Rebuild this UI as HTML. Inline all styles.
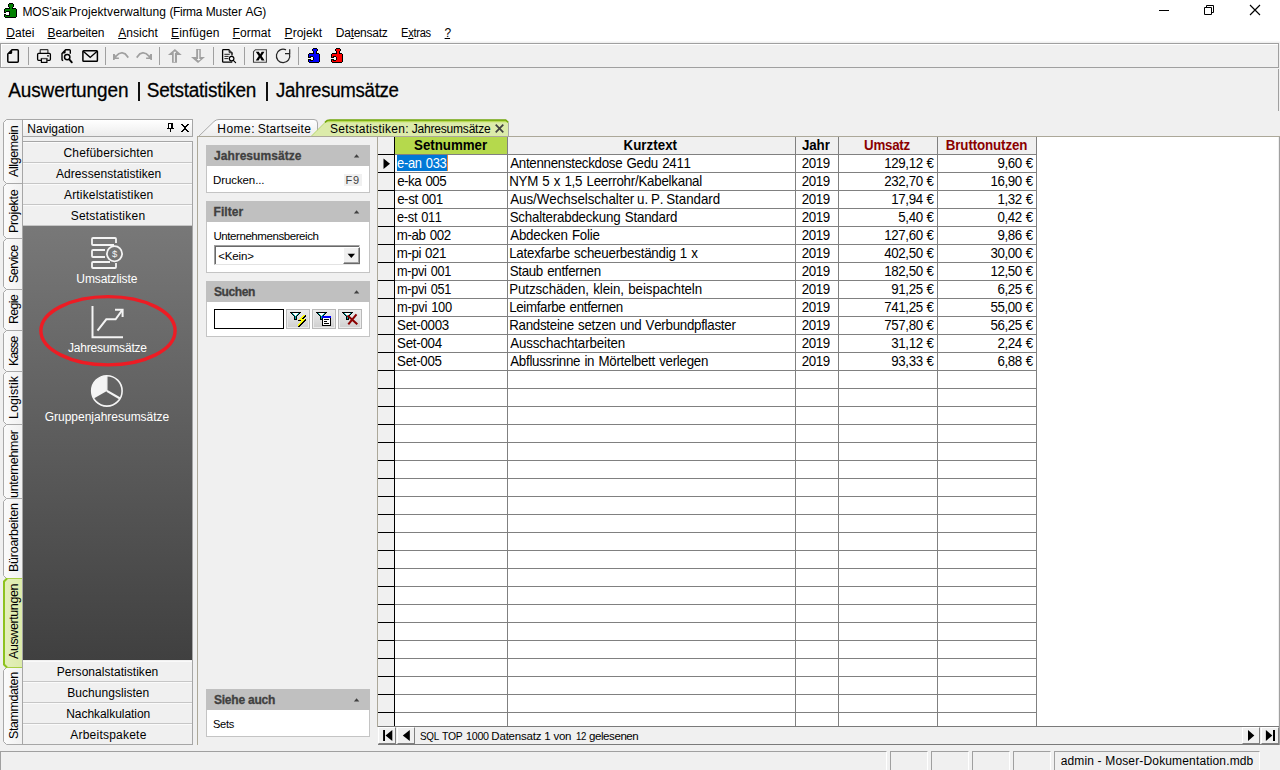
<!DOCTYPE html>
<html><head><meta charset="utf-8">
<style>
*{box-sizing:border-box;margin:0;padding:0}
html,body{width:1280px;height:770px;overflow:hidden;background:#f0f0f0;font-family:"Liberation Sans",sans-serif;color:#000}
.a{position:absolute}
.t{position:absolute;white-space:nowrap;font-kerning:none}
u{text-decoration:underline;text-underline-offset:0.5px;text-decoration-thickness:1px}
</style></head><body>
<div class="a" style="left:0px;top:0px;width:1280px;height:41px;background:#fff"></div>
<div class="a" style="left:0px;top:41px;width:1280px;height:1px;background:#f8f8f8"></div>
<svg class="a" style="left:0;top:0" width="22" height="22" viewBox="0 0 22 22" shape-rendering="crispEdges"><rect x="9" y="3" width="4" height="1" fill="#000"/><rect x="8" y="4" width="1" height="1" fill="#000"/><rect x="9" y="4" width="4" height="1" fill="#008000"/><rect x="13" y="4" width="1" height="1" fill="#000"/><rect x="8" y="5" width="1" height="1" fill="#000"/><rect x="9" y="5" width="4" height="1" fill="#008000"/><rect x="13" y="5" width="1" height="1" fill="#000"/><rect x="8" y="6" width="1" height="1" fill="#000"/><rect x="9" y="6" width="4" height="1" fill="#008000"/><rect x="13" y="6" width="1" height="1" fill="#000"/><rect x="9" y="7" width="1" height="1" fill="#000"/><rect x="10" y="7" width="2" height="1" fill="#008000"/><rect x="12" y="7" width="1" height="1" fill="#000"/><rect x="5" y="8" width="5" height="1" fill="#000"/><rect x="10" y="8" width="2" height="1" fill="#008000"/><rect x="12" y="8" width="4" height="1" fill="#000"/><rect x="4" y="9" width="1" height="1" fill="#000"/><rect x="5" y="9" width="11" height="1" fill="#008000"/><rect x="16" y="9" width="1" height="1" fill="#000"/><rect x="4" y="10" width="1" height="1" fill="#000"/><rect x="5" y="10" width="11" height="1" fill="#008000"/><rect x="16" y="10" width="1" height="1" fill="#000"/><rect x="4" y="11" width="1" height="1" fill="#000"/><rect x="5" y="11" width="1" height="1" fill="#008000"/><rect x="6" y="11" width="4" height="1" fill="#000"/><rect x="10" y="11" width="6" height="1" fill="#008000"/><rect x="16" y="11" width="1" height="1" fill="#000"/><rect x="4" y="12" width="2" height="1" fill="#000"/><rect x="6" y="12" width="3" height="1" fill="#fff"/><rect x="9" y="12" width="1" height="1" fill="#000"/><rect x="10" y="12" width="6" height="1" fill="#008000"/><rect x="16" y="12" width="1" height="1" fill="#000"/><rect x="4" y="13" width="5" height="1" fill="#fff"/><rect x="9" y="13" width="1" height="1" fill="#000"/><rect x="10" y="13" width="6" height="1" fill="#008000"/><rect x="16" y="13" width="1" height="1" fill="#000"/><rect x="4" y="14" width="2" height="1" fill="#000"/><rect x="6" y="14" width="3" height="1" fill="#fff"/><rect x="9" y="14" width="1" height="1" fill="#000"/><rect x="10" y="14" width="6" height="1" fill="#008000"/><rect x="16" y="14" width="1" height="1" fill="#000"/><rect x="4" y="15" width="1" height="1" fill="#000"/><rect x="5" y="15" width="1" height="1" fill="#008000"/><rect x="6" y="15" width="4" height="1" fill="#000"/><rect x="10" y="15" width="6" height="1" fill="#008000"/><rect x="16" y="15" width="1" height="1" fill="#000"/><rect x="4" y="16" width="1" height="1" fill="#000"/><rect x="5" y="16" width="11" height="1" fill="#008000"/><rect x="16" y="16" width="1" height="1" fill="#000"/><rect x="5" y="17" width="11" height="1" fill="#000"/></svg>
<div class="t " style="left:22.42px;top:5.00px;font-size:12px;line-height:14px;letter-spacing:-0.116px;color:#000;">MOS'aik</div>
<div class="t " style="left:69.02px;top:5.00px;font-size:12px;line-height:14px;letter-spacing:0.099px;color:#000;">Projektverwaltung</div>
<div class="t " style="left:169.46px;top:5.00px;font-size:12px;line-height:14px;letter-spacing:-0.343px;color:#000;">(Firma</div>
<div class="t " style="left:205.72px;top:5.00px;font-size:12px;line-height:14px;letter-spacing:-0.098px;color:#000;">Muster</div>
<div class="t " style="left:245.48px;top:5.00px;font-size:12px;line-height:14px;letter-spacing:-0.333px;color:#000;">AG)</div>
<svg class="a" style="left:1154px;top:0px;" width="120" height="22" viewBox="0 0 120 22"><path d="M5 10.500h10" stroke="#000" stroke-width="1"/>
<path d="M50.500 7.500h7v7h-7z M52.500 7.500v-2h7v7h-2" fill="none" stroke="#000" stroke-width="1"/>
<path d="M96 5l10 10M106 5l-10 10" stroke="#000" stroke-width="1.150"/></svg>
<div class="t " style="left:6.22px;top:26.00px;font-size:12px;line-height:14px;letter-spacing:0.045px;color:#000;"><u>D</u>atei</div>
<div class="t " style="left:47.52px;top:26.00px;font-size:12px;line-height:14px;letter-spacing:-0.120px;color:#000;"><u>B</u>earbeiten</div>
<div class="t " style="left:118.18px;top:26.00px;font-size:12px;line-height:14px;letter-spacing:0.060px;color:#000;"><u>A</u>nsicht</div>
<div class="t " style="left:171.12px;top:26.00px;font-size:12px;line-height:14px;letter-spacing:0.142px;color:#000;"><u>E</u>infügen</div>
<div class="t " style="left:232.62px;top:26.00px;font-size:12px;line-height:14px;letter-spacing:0.054px;color:#000;"><u>F</u>ormat</div>
<div class="t " style="left:284.62px;top:26.00px;font-size:12px;line-height:14px;letter-spacing:0.021px;color:#000;"><u>P</u>rojekt</div>
<div class="t " style="left:335.82px;top:26.00px;font-size:12px;line-height:14px;letter-spacing:-0.268px;color:#000;">Da<u>t</u>ensatz</div>
<div class="t " style="left:400.69px;top:26.00px;font-size:12px;line-height:14px;letter-spacing:-0.300px;color:#000;transform:scale(0.9263,1);transform-origin:0 11px;">E<u>x</u>tras</div>
<div class="t " style="left:444.61px;top:26.00px;font-size:12px;line-height:14px;letter-spacing:-1.236px;color:#000;"><u>?</u></div>
<div class="a" style="left:0px;top:43px;width:1279px;height:25px;border:1px solid #a0a0a0;background:#f0f0f0;box-shadow:inset 1px 1px 0 #fff"></div>
<div class="a" style="left:28px;top:47px;width:1px;height:18px;background:#a0a0a0"></div>
<div class="a" style="left:105px;top:47px;width:1px;height:18px;background:#a0a0a0"></div>
<div class="a" style="left:159px;top:47px;width:1px;height:18px;background:#a0a0a0"></div>
<div class="a" style="left:213px;top:47px;width:1px;height:18px;background:#a0a0a0"></div>
<div class="a" style="left:244px;top:47px;width:1px;height:18px;background:#a0a0a0"></div>
<div class="a" style="left:298px;top:47px;width:1px;height:18px;background:#a0a0a0"></div>
<div class="t " style="left:8.16px;top:79.00px;font-size:19px;line-height:23px;letter-spacing:-0.100px;color:#000;-webkit-text-stroke:0.25px #000;transform:scale(1.0000,1.08);transform-origin:0 18px;">Auswertungen</div>
<div class="t " style="left:146.74px;top:79.00px;font-size:19px;line-height:23px;letter-spacing:-0.254px;color:#000;-webkit-text-stroke:0.25px #000;transform:scale(1.0000,1.08);transform-origin:0 18px;">Setstatistiken</div>
<div class="t " style="left:275.91px;top:79.00px;font-size:19px;line-height:23px;letter-spacing:-0.300px;color:#000;-webkit-text-stroke:0.25px #000;transform:scale(0.9815,1.08);transform-origin:0 18px;">Jahresumsätze</div>
<div class="a" style="left:138px;top:82px;width:2px;height:19px;background:#111"></div>
<div class="a" style="left:266px;top:82px;width:2px;height:19px;background:#111"></div>
<div class="a" style="left:1278px;top:69px;width:1px;height:42px;background:#a0a0a0"></div>
<svg class="a" style="left:0;top:43px" width="360" height="25" viewBox="0 43 360 25">
<!-- new -->
<path d="M12 49.750H17.300Q18.300 49.750 18.300 50.750V61.250Q18.300 62.250 17.300 62.250H8.800Q7.800 62.250 7.800 61.250V54Z" fill="none" stroke="#000" stroke-width="1.500" stroke-linejoin="round"/>
<path d="M8.200 53.900L12.200 49.800V52.400Q12.200 53.900 10.800 53.900Z" fill="#000"/>
<!-- print -->
<path d="M40.200 53V50.200Q40.200 49.600 40.800 49.600H47.300Q47.900 49.600 47.900 50.200V53" fill="none" stroke="#333" stroke-width="1.200"/>
<path d="M41 60.300H38.600Q37.600 60.300 37.600 59.300V54.400Q37.600 53.400 38.600 53.400H49.400Q50.400 53.400 50.400 54.400V59.300Q50.400 60.300 49.400 60.300H47.200" fill="none" stroke="#000" stroke-width="1.300"/>
<rect x="41.400" y="58.600" width="5.500" height="3.800" fill="#f0f0f0" stroke="#000" stroke-width="1.200"/>
<path d="M41.400 58.400h5.500" stroke="#555" stroke-width="1"/>
<circle cx="48" cy="55.800" r="0.900" fill="#000"/>
<!-- preview -->
<path d="M70.300 53.800V50.600Q70.300 49.700 69.400 49.700H65.600L62 53.400V59.400Q62 60.400 63.200 60.500" fill="none" stroke="#000" stroke-width="1.400" stroke-linejoin="round"/>
<path d="M62.300 53.500L65.600 50V52.500Q65.600 53.500 64.600 53.500Z" fill="#000"/>
<circle cx="67.200" cy="57.100" r="2.700" fill="#f6f6f6" stroke="#000" stroke-width="1.500"/>
<path d="M69.300 59.400L71.800 62.300" stroke="#000" stroke-width="1.900" stroke-linecap="round"/>
<!-- mail -->
<rect x="82.900" y="50.800" width="14.500" height="10.500" rx="0.800" fill="none" stroke="#000" stroke-width="1.500"/>
<path d="M83.200 51.300L90.200 57.400L97.100 51.300" fill="none" stroke="#000" stroke-width="1.400"/>
<!-- undo / redo -->
<g><path d="M128.300 57.600L125.200 53.900L122 52.700L118.600 53.800L115.300 56.800" fill="none" stroke="#a0a0a0" stroke-width="1.700" stroke-linejoin="round"/>
<path d="M113 54h1.700l1.800 3.400h2.400v1.700h-4.200v1h-1.700z" fill="#a0a0a0"/></g>
<g transform="translate(265,0) scale(-1,1)"><path d="M128.300 57.600L125.200 53.900L122 52.700L118.600 53.800L115.300 56.800" fill="none" stroke="#a0a0a0" stroke-width="1.700" stroke-linejoin="round"/>
<path d="M113 54h1.700l1.800 3.400h2.400v1.700h-4.200v1h-1.700z" fill="#a0a0a0"/></g>
<!-- up -->
<path d="M174.900 49L181.800 54.900H177V62.800H172V54.900H167.900Z" fill="#a0a0a0"/>
<path d="M174.300 62V52.300H176" fill="none" stroke="#f8f8f8" stroke-width="1.100"/>
<!-- down -->
<path d="M196.200 49H200.800V57H205L198 62.900L191 57H196.200Z" fill="#a0a0a0"/>
<path d="M198.700 49.800V60.500M197.200 59.500h3" fill="none" stroke="#f8f8f8" stroke-width="1.100"/>
<!-- doc search -->
<path d="M229.200 49.600H223.400Q222.600 49.600 222.600 50.400V61.400Q222.600 62.200 223.400 62.200H231Q231.800 62.200 232 61.500M232 55.500V52.600Z" fill="none" stroke="#000" stroke-width="1.300"/>
<path d="M229 49.600L232.300 52.800H229.800Q229 52.800 229 52Z" fill="#555" stroke="#000" stroke-width="0.700"/>
<path d="M224.400 54.300H229.800M224.400 56.400H228.600M224.400 58.600H228.200" stroke="#222" stroke-width="1"/>
<circle cx="231.600" cy="58.600" r="2.300" fill="#f6f6f6" stroke="#000" stroke-width="1.200"/>
<path d="M233.300 60.400L235.600 62.600" stroke="#000" stroke-width="1.200" stroke-linecap="round"/>
<!-- excel -->
<path d="M255.500 49.700H266.400V62.300H253.500V51.700Z" fill="#f4f4f4" stroke="#404040" stroke-width="1.100"/>
<path d="M255.800 51.800H258.800L260.200 54.300L261.700 51.800H264.500L261.700 56L264.600 60.400H261.600L260.100 57.800L258.600 60.400H255.700L258.700 56Z" fill="#000"/>
<!-- refresh -->
<path d="M289.500 54A6.700 6.700 0 1 1 286 49.900" fill="none" stroke="#262626" stroke-width="1.250"/>
<path d="M285 53.600H289.700V49.200" fill="none" stroke="#262626" stroke-width="1.250"/>
<g shape-rendering="crispEdges"><rect x="313" y="48" width="4" height="1" fill="#000"/><rect x="312" y="49" width="1" height="1" fill="#000"/><rect x="313" y="49" width="4" height="1" fill="#0000ff"/><rect x="317" y="49" width="1" height="1" fill="#000"/><rect x="312" y="50" width="1" height="1" fill="#000"/><rect x="313" y="50" width="4" height="1" fill="#0000ff"/><rect x="317" y="50" width="1" height="1" fill="#000"/><rect x="313" y="51" width="1" height="1" fill="#000"/><rect x="314" y="51" width="2" height="1" fill="#0000ff"/><rect x="316" y="51" width="1" height="1" fill="#000"/><rect x="313" y="52" width="1" height="1" fill="#000"/><rect x="314" y="52" width="2" height="1" fill="#0000ff"/><rect x="316" y="52" width="1" height="1" fill="#000"/><rect x="309" y="53" width="5" height="1" fill="#000"/><rect x="314" y="53" width="2" height="1" fill="#0000ff"/><rect x="316" y="53" width="3" height="1" fill="#000"/><rect x="308" y="54" width="1" height="1" fill="#000"/><rect x="309" y="54" width="10" height="1" fill="#0000ff"/><rect x="319" y="54" width="1" height="1" fill="#000"/><rect x="308" y="55" width="1" height="1" fill="#000"/><rect x="309" y="55" width="10" height="1" fill="#0000ff"/><rect x="319" y="55" width="1" height="1" fill="#000"/><rect x="308" y="56" width="1" height="1" fill="#000"/><rect x="309" y="56" width="1" height="1" fill="#0000ff"/><rect x="310" y="56" width="3" height="1" fill="#000"/><rect x="313" y="56" width="6" height="1" fill="#0000ff"/><rect x="319" y="56" width="1" height="1" fill="#000"/><rect x="308" y="57" width="3" height="1" fill="#000"/><rect x="311" y="57" width="2" height="1" fill="#f8f8f8"/><rect x="313" y="57" width="1" height="1" fill="#000"/><rect x="314" y="57" width="5" height="1" fill="#0000ff"/><rect x="319" y="57" width="1" height="1" fill="#000"/><rect x="308" y="58" width="5" height="1" fill="#f8f8f8"/><rect x="313" y="58" width="1" height="1" fill="#000"/><rect x="314" y="58" width="5" height="1" fill="#0000ff"/><rect x="319" y="58" width="1" height="1" fill="#000"/><rect x="308" y="59" width="3" height="1" fill="#000"/><rect x="311" y="59" width="2" height="1" fill="#f8f8f8"/><rect x="313" y="59" width="1" height="1" fill="#000"/><rect x="314" y="59" width="5" height="1" fill="#0000ff"/><rect x="319" y="59" width="1" height="1" fill="#000"/><rect x="308" y="60" width="1" height="1" fill="#000"/><rect x="309" y="60" width="1" height="1" fill="#0000ff"/><rect x="310" y="60" width="3" height="1" fill="#000"/><rect x="313" y="60" width="6" height="1" fill="#0000ff"/><rect x="319" y="60" width="1" height="1" fill="#000"/><rect x="308" y="61" width="1" height="1" fill="#000"/><rect x="309" y="61" width="10" height="1" fill="#0000ff"/><rect x="319" y="61" width="1" height="1" fill="#000"/><rect x="309" y="62" width="10" height="1" fill="#000"/></g><g shape-rendering="crispEdges"><rect x="336" y="48" width="4" height="1" fill="#000"/><rect x="335" y="49" width="1" height="1" fill="#000"/><rect x="336" y="49" width="4" height="1" fill="#ff0000"/><rect x="340" y="49" width="1" height="1" fill="#000"/><rect x="335" y="50" width="1" height="1" fill="#000"/><rect x="336" y="50" width="4" height="1" fill="#ff0000"/><rect x="340" y="50" width="1" height="1" fill="#000"/><rect x="336" y="51" width="1" height="1" fill="#000"/><rect x="337" y="51" width="2" height="1" fill="#ff0000"/><rect x="339" y="51" width="1" height="1" fill="#000"/><rect x="336" y="52" width="1" height="1" fill="#000"/><rect x="337" y="52" width="2" height="1" fill="#ff0000"/><rect x="339" y="52" width="1" height="1" fill="#000"/><rect x="332" y="53" width="5" height="1" fill="#000"/><rect x="337" y="53" width="2" height="1" fill="#ff0000"/><rect x="339" y="53" width="3" height="1" fill="#000"/><rect x="331" y="54" width="1" height="1" fill="#000"/><rect x="332" y="54" width="10" height="1" fill="#ff0000"/><rect x="342" y="54" width="1" height="1" fill="#000"/><rect x="331" y="55" width="1" height="1" fill="#000"/><rect x="332" y="55" width="10" height="1" fill="#ff0000"/><rect x="342" y="55" width="1" height="1" fill="#000"/><rect x="331" y="56" width="1" height="1" fill="#000"/><rect x="332" y="56" width="1" height="1" fill="#ff0000"/><rect x="333" y="56" width="3" height="1" fill="#000"/><rect x="336" y="56" width="6" height="1" fill="#ff0000"/><rect x="342" y="56" width="1" height="1" fill="#000"/><rect x="331" y="57" width="3" height="1" fill="#000"/><rect x="334" y="57" width="2" height="1" fill="#f8f8f8"/><rect x="336" y="57" width="1" height="1" fill="#000"/><rect x="337" y="57" width="5" height="1" fill="#ff0000"/><rect x="342" y="57" width="1" height="1" fill="#000"/><rect x="331" y="58" width="5" height="1" fill="#f8f8f8"/><rect x="336" y="58" width="1" height="1" fill="#000"/><rect x="337" y="58" width="5" height="1" fill="#ff0000"/><rect x="342" y="58" width="1" height="1" fill="#000"/><rect x="331" y="59" width="3" height="1" fill="#000"/><rect x="334" y="59" width="2" height="1" fill="#f8f8f8"/><rect x="336" y="59" width="1" height="1" fill="#000"/><rect x="337" y="59" width="5" height="1" fill="#ff0000"/><rect x="342" y="59" width="1" height="1" fill="#000"/><rect x="331" y="60" width="1" height="1" fill="#000"/><rect x="332" y="60" width="1" height="1" fill="#ff0000"/><rect x="333" y="60" width="3" height="1" fill="#000"/><rect x="336" y="60" width="6" height="1" fill="#ff0000"/><rect x="342" y="60" width="1" height="1" fill="#000"/><rect x="331" y="61" width="1" height="1" fill="#000"/><rect x="332" y="61" width="10" height="1" fill="#ff0000"/><rect x="342" y="61" width="1" height="1" fill="#000"/><rect x="332" y="62" width="10" height="1" fill="#000"/></g></svg>
<svg class="a" style="left:0;top:116px" width="24" height="632" viewBox="0 116 24 632"><defs><linearGradient id="vg" x1="0" y1="0" x2="1" y2="0"><stop offset="0" stop-color="#fbfbfb"/><stop offset="1" stop-color="#f0f0f0"/></linearGradient><linearGradient id="vga" x1="0" y1="0" x2="1" y2="0"><stop offset="0" stop-color="#e4efbb"/><stop offset="1" stop-color="#dcebaa"/></linearGradient></defs><path d="M23 119.5H6.500L3.500 122.5V180.5L6.500 183.5H23" fill="url(#vg)" stroke="#a9a9a9"/><path d="M23 183.5H6.500L3.500 186.5V235.5L6.500 238.5H23" fill="url(#vg)" stroke="#a9a9a9"/><path d="M23 238.5H6.500L3.500 241.5V286.5L6.500 289.5H23" fill="url(#vg)" stroke="#a9a9a9"/><path d="M23 289.5H6.500L3.500 292.5V327.5L6.500 330.5H23" fill="url(#vg)" stroke="#a9a9a9"/><path d="M23 330.5H6.500L3.500 333.5V368.5L6.500 371.5H23" fill="url(#vg)" stroke="#a9a9a9"/><path d="M23 371.5H6.500L3.500 374.5V421.5L6.500 424.5H23" fill="url(#vg)" stroke="#a9a9a9"/><path d="M23 424.5H6.500L3.500 427.5V495.5L6.500 498.5H23" fill="url(#vg)" stroke="#a9a9a9"/><path d="M23 498.5H6.500L3.500 501.5V575.5L6.500 578.5H23" fill="url(#vg)" stroke="#a9a9a9"/><path d="M23 667.5H6.500L3.500 670.5V741.5L6.500 744.5H23" fill="url(#vg)" stroke="#a9a9a9"/><path d="M23 578.5H6.500L3.500 581.5V664.5L6.500 667.5H23" fill="url(#vga)" stroke="#a8cf45"/><path d="M7 578.5L4 581.5V664.5L7 667.5" fill="none" stroke="#8dc21f" stroke-width="2"/></svg>
<div class="a" style="left:4px;top:120px;width:19px;height:63px;overflow:hidden">
<div style="position:absolute;left:13.70px;top:56.72px;width:0;height:0"><div style="position:absolute;left:0;top:0;transform-origin:0 0;transform:rotate(-90deg);white-space:nowrap;font-kerning:none;font-size:12.5px;line-height:0;letter-spacing:-0.407px"><span style="position:relative;top:-4.4px;line-height:normal;display:inline-block;transform:translateY(-50%)">Allgemein</span></div></div>
</div>
<div class="a" style="left:4px;top:184px;width:19px;height:54px;overflow:hidden">
<div style="position:absolute;left:13.70px;top:48.93px;width:0;height:0"><div style="position:absolute;left:0;top:0;transform-origin:0 0;transform:rotate(-90deg);white-space:nowrap;font-kerning:none;font-size:12.5px;line-height:0;letter-spacing:-0.325px"><span style="position:relative;top:-4.4px;line-height:normal;display:inline-block;transform:translateY(-50%)">Projekte</span></div></div>
</div>
<div class="a" style="left:4px;top:239px;width:19px;height:50px;overflow:hidden">
<div style="position:absolute;left:13.70px;top:44.17px;width:0;height:0"><div style="position:absolute;left:0;top:0;transform-origin:0 0;transform:rotate(-90deg);white-space:nowrap;font-kerning:none;font-size:12.5px;line-height:0;letter-spacing:-0.576px"><span style="position:relative;top:-4.4px;line-height:normal;display:inline-block;transform:translateY(-50%)">Service</span></div></div>
</div>
<div class="a" style="left:4px;top:290px;width:19px;height:40px;overflow:hidden">
<div style="position:absolute;left:13.70px;top:33.93px;width:0;height:0"><div style="position:absolute;left:0;top:0;transform-origin:0 0;transform:rotate(-90deg);white-space:nowrap;font-kerning:none;font-size:12.5px;line-height:0;letter-spacing:-0.745px"><span style="position:relative;top:-4.4px;line-height:normal;display:inline-block;transform:translateY(-50%)">Regie</span></div></div>
</div>
<div class="a" style="left:4px;top:331px;width:19px;height:40px;overflow:hidden">
<div style="position:absolute;left:13.70px;top:35.13px;width:0;height:0"><div style="position:absolute;left:0;top:0;transform-origin:0 0;transform:rotate(-90deg);white-space:nowrap;font-kerning:none;font-size:12.5px;line-height:0;letter-spacing:-1.165px"><span style="position:relative;top:-4.4px;line-height:normal;display:inline-block;transform:translateY(-50%)">Kasse</span></div></div>
</div>
<div class="a" style="left:4px;top:372px;width:19px;height:52px;overflow:hidden">
<div style="position:absolute;left:13.70px;top:46.93px;width:0;height:0"><div style="position:absolute;left:0;top:0;transform-origin:0 0;transform:rotate(-90deg);white-space:nowrap;font-kerning:none;font-size:12.5px;line-height:0;letter-spacing:0.089px"><span style="position:relative;top:-4.4px;line-height:normal;display:inline-block;transform:translateY(-50%)">Logistik</span></div></div>
</div>
<div class="a" style="left:4px;top:425px;width:19px;height:73px;overflow:hidden">
<div style="position:absolute;left:13.70px;top:73.01px;width:0;height:0"><div style="position:absolute;left:0;top:0;transform-origin:0 0;transform:rotate(-90deg);white-space:nowrap;font-kerning:none;font-size:12.5px;line-height:0;letter-spacing:-0.285px"><span style="position:relative;top:-4.4px;line-height:normal;display:inline-block;transform:translateY(-50%)">unternehmer</span></div></div>
</div>
<div class="a" style="left:4px;top:499px;width:19px;height:79px;overflow:hidden">
<div style="position:absolute;left:13.70px;top:72.93px;width:0;height:0"><div style="position:absolute;left:0;top:0;transform-origin:0 0;transform:rotate(-90deg);white-space:nowrap;font-kerning:none;font-size:12.5px;line-height:0;letter-spacing:-0.249px"><span style="position:relative;top:-4.4px;line-height:normal;display:inline-block;transform:translateY(-50%)">Büroarbeiten</span></div></div>
</div>
<div class="a" style="left:4px;top:579px;width:19px;height:88px;overflow:hidden">
<div style="position:absolute;left:13.70px;top:79.52px;width:0;height:0"><div style="position:absolute;left:0;top:0;transform-origin:0 0;transform:rotate(-90deg);white-space:nowrap;font-kerning:none;font-size:12.5px;line-height:0;letter-spacing:-0.407px"><span style="position:relative;top:-4.4px;line-height:normal;display:inline-block;transform:translateY(-50%)">Auswertungen</span></div></div>
</div>
<div class="a" style="left:4px;top:668px;width:19px;height:76px;overflow:hidden">
<div style="position:absolute;left:13.70px;top:70.57px;width:0;height:0"><div style="position:absolute;left:0;top:0;transform-origin:0 0;transform:rotate(-90deg);white-space:nowrap;font-kerning:none;font-size:12.5px;line-height:0;letter-spacing:-0.421px"><span style="position:relative;top:-4.4px;line-height:normal;display:inline-block;transform:translateY(-50%)">Stammdaten</span></div></div>
</div>
<div class="a" style="left:22px;top:119px;width:171px;height:18px;border:1px solid #a6a6a6;background:linear-gradient(180deg,#fff,#ececec)"></div>
<div class="t " style="left:27.32px;top:122.00px;font-size:12px;line-height:14px;letter-spacing:0.007px;color:#000;">Navigation</div>
<svg class="a" style="left:160px;top:118px" width="34" height="20" viewBox="160 118 34 20" shape-rendering="crispEdges"><rect x="168" y="123" width="5" height="1" fill="#000"/><rect x="168" y="124" width="1" height="1" fill="#000"/><rect x="169" y="124" width="2" height="1" fill="#fff"/><rect x="171" y="124" width="2" height="1" fill="#000"/><rect x="168" y="125" width="1" height="1" fill="#000"/><rect x="169" y="125" width="2" height="1" fill="#fff"/><rect x="171" y="125" width="2" height="1" fill="#000"/><rect x="168" y="126" width="1" height="1" fill="#000"/><rect x="169" y="126" width="2" height="1" fill="#fff"/><rect x="171" y="126" width="2" height="1" fill="#000"/><rect x="168" y="127" width="1" height="1" fill="#000"/><rect x="169" y="127" width="2" height="1" fill="#fff"/><rect x="171" y="127" width="2" height="1" fill="#000"/><rect x="167" y="128" width="7" height="1" fill="#000"/><rect x="170" y="129" width="1" height="1" fill="#000"/><rect x="170" y="130" width="1" height="1" fill="#000"/><rect x="170" y="131" width="1" height="1" fill="#000"/><rect x="181" y="124" width="2" height="1" fill="#000"/><rect x="187" y="124" width="2" height="1" fill="#000"/><rect x="182" y="125" width="2" height="1" fill="#000"/><rect x="186" y="125" width="2" height="1" fill="#000"/><rect x="183" y="126" width="4" height="1" fill="#000"/><rect x="184" y="127" width="2" height="1" fill="#000"/><rect x="184" y="128" width="2" height="1" fill="#000"/><rect x="183" y="129" width="4" height="1" fill="#000"/><rect x="182" y="130" width="2" height="1" fill="#000"/><rect x="186" y="130" width="2" height="1" fill="#000"/><rect x="181" y="131" width="2" height="1" fill="#000"/><rect x="187" y="131" width="2" height="1" fill="#000"/></svg>
<div class="a" style="left:22px;top:141px;width:171px;height:604px;border:1px solid #a6a6a6;background:#f0f0f0"></div>
<div class="a" style="left:22px;top:136px;width:1px;height:6px;background:#a6a6a6"></div>
<div class="a" style="left:23px;top:142px;width:169px;height:21px;border-top:1px solid #fafafa;border-bottom:1px solid #c6c6c6;background:#f0f0f0"></div>
<div class="t " style="left:63.49px;top:146.00px;font-size:12px;line-height:14px;letter-spacing:0.172px;color:#000;">Chefübersichten</div>
<div class="a" style="left:23px;top:163px;width:169px;height:21px;border-top:1px solid #fafafa;border-bottom:1px solid #c6c6c6;background:#f0f0f0"></div>
<div class="t " style="left:55.98px;top:167.00px;font-size:12px;line-height:14px;letter-spacing:0.064px;color:#000;">Adressenstatistiken</div>
<div class="a" style="left:23px;top:184px;width:169px;height:21px;border-top:1px solid #fafafa;border-bottom:1px solid #c6c6c6;background:#f0f0f0"></div>
<div class="t " style="left:64.08px;top:188.00px;font-size:12px;line-height:14px;letter-spacing:0.147px;color:#000;">Artikelstatistiken</div>
<div class="a" style="left:23px;top:205px;width:169px;height:21px;border-top:1px solid #fafafa;border-bottom:1px solid #c6c6c6;background:#f0f0f0"></div>
<div class="t " style="left:70.66px;top:209.00px;font-size:12px;line-height:14px;letter-spacing:0.235px;color:#000;">Setstatistiken</div>
<div class="a" style="left:23px;top:661px;width:169px;height:21px;border-top:1px solid #fafafa;border-bottom:1px solid #c6c6c6;background:#f0f0f0"></div>
<div class="t " style="left:56.82px;top:665.00px;font-size:12px;line-height:14px;letter-spacing:0.041px;color:#000;">Personalstatistiken</div>
<div class="a" style="left:23px;top:682px;width:169px;height:21px;border-top:1px solid #fafafa;border-bottom:1px solid #c6c6c6;background:#f0f0f0"></div>
<div class="t " style="left:67.32px;top:686.00px;font-size:12px;line-height:14px;letter-spacing:0.037px;color:#000;">Buchungslisten</div>
<div class="a" style="left:23px;top:703px;width:169px;height:21px;border-top:1px solid #fafafa;border-bottom:1px solid #c6c6c6;background:#f0f0f0"></div>
<div class="t " style="left:66.22px;top:707.00px;font-size:12px;line-height:14px;letter-spacing:-0.047px;color:#000;">Nachkalkulation</div>
<div class="a" style="left:23px;top:724px;width:169px;height:21px;border-top:1px solid #fafafa;border-bottom:1px solid #c6c6c6;background:#f0f0f0"></div>
<div class="t " style="left:70.28px;top:728.00px;font-size:12px;line-height:14px;letter-spacing:0.223px;color:#000;">Arbeitspakete</div>
<div class="a" style="left:22px;top:744px;width:171px;height:1px;background:#a6a6a6"></div>
<div class="a" style="left:23px;top:226px;width:169px;height:434px;background:linear-gradient(180deg,#787878,#404040)"></div>
<svg class="a" style="left:23px;top:226px" width="169" height="434" viewBox="23 226 169 434">
<g fill="none" stroke="#f4f4f4" stroke-width="1.800">
<path d="M114 245H93Q92 245 92 244V239Q92 238 93 238H115Q116 238 116 239V243"/>
<path d="M105 257H93Q92 257 92 256V251Q92 250 93 250H105"/>
<path d="M110 262H93Q92 262 92 263V267Q92 268 93 268H115Q116 268 116 267V263"/>
<circle cx="114.500" cy="253.700" r="7.600"/>
</g>
<text x="114.600" y="257.300" font-size="9.500" fill="#f4f4f4" text-anchor="middle" font-family="Liberation Sans">$</text>
<g fill="none" stroke="#f4f4f4" stroke-width="2">
<path d="M92.500 306V337.300H123"/>
<path d="M97.500 330.600L106.300 319.300H115.600L122.300 310"/>
<path d="M115 309.700H122.600V317"/>
</g>
<circle cx="106.900" cy="390.900" r="15.200" fill="none" stroke="#f4f4f4" stroke-width="1.600"/>
<path d="M106.900 390.900V375.700A15.200 15.200 0 0 0 93.740 398.500Z" fill="#f4f4f4"/>
<path d="M106.900 390.900L120 398.500" stroke="#f4f4f4" stroke-width="2.200"/>
<path d="M106.900 390.900V376" stroke="#f4f4f4" stroke-width="1.200"/>
<ellipse cx="108" cy="330.750" rx="67.100" ry="34.100" fill="none" stroke="#ed1c24" stroke-width="3.400"/>
</svg>
<div class="t " style="left:76.37px;top:272.00px;font-size:12px;line-height:14px;letter-spacing:-0.105px;color:#fff;">Umsatzliste</div>
<div class="t " style="left:67.91px;top:341.00px;font-size:12px;line-height:14px;letter-spacing:-0.187px;color:#fff;">Jahresumsätze</div>
<div class="t " style="left:44.65px;top:410.00px;font-size:12px;line-height:14px;letter-spacing:-0.005px;color:#fff;">Gruppenjahresumsätze</div>
<svg class="a" style="left:190px;top:116px" width="330" height="22" viewBox="190 116 330 22">
<defs><linearGradient id="tg" x1="0" y1="0" x2="0" y2="1"><stop offset="0" stop-color="#ffffff"/><stop offset="1" stop-color="#ececec"/></linearGradient>
<linearGradient id="tga" x1="0" y1="0" x2="0" y2="1"><stop offset="0" stop-color="#a2cd2c"/><stop offset="0.1" stop-color="#bcdd5c"/><stop offset="0.17" stop-color="#dcebaa"/><stop offset="1" stop-color="#dcebaa"/></linearGradient></defs>
<path d="M198.500 136.500L214 121.500Q216 119.500 219 119.500H314Q317.500 119.500 317.500 123V136.500Z" fill="url(#tg)" stroke="#aaa" stroke-width="1"/>
<path d="M311 136.500L325 122.500Q327 120 330 120H505.500L508.500 123V136.500Z" fill="url(#tga)"/>
<path d="M311.500 136L325.500 122" fill="none" stroke="#b8d66e" stroke-width="1"/>
<path d="M325 122.300L327.300 120.400Q328.500 119.900 330 119.900H505.700L508.400 122.500" fill="none" stroke="#72a50c" stroke-width="1.500"/>
<path d="M508.500 122.800V136" stroke="#a8a8a8" stroke-width="1"/>
<path d="M495.700 124.600l7.600 7.800M503.300 124.600l-7.600 7.800" stroke="#404040" stroke-width="1.700"/>
</svg>
<div class="t " style="left:217.32px;top:122.00px;font-size:12px;line-height:14px;letter-spacing:0.484px;color:#000;">Home:</div>
<div class="t " style="left:257.76px;top:122.00px;font-size:12px;line-height:14px;letter-spacing:0.265px;color:#000;">Startseite</div>
<div class="t " style="left:330.06px;top:122.00px;font-size:12px;line-height:14px;letter-spacing:0.267px;color:#000;">Setstatistiken:</div>
<div class="t " style="left:411.81px;top:122.00px;font-size:12px;line-height:14px;letter-spacing:-0.204px;color:#000;">Jahresumsätze</div>
<div class="a" style="left:197px;top:136px;width:1083px;height:609px;border:1px solid #aca899;border-right:none;border-bottom:none;background:#f0f0f0"></div>
<div class="a" style="left:206px;top:145px;width:164px;height:21px;background:#c0c0c0"></div>
<div class="t " style="left:214.12px;top:149.00px;font-size:12px;line-height:14px;letter-spacing:0.048px;font-weight:bold;color:#404040;-webkit-text-stroke:0.3px #404040;">Jahresumsätze</div>
<svg class="a" style="left:353px;top:153px;" width="8" height="6" viewBox="0 0 8 6"><path d="M0.900 4.400L3.600 1.200L6.300 4.400Z" fill="#404040"/></svg>
<div class="a" style="left:206px;top:166px;width:164px;height:27px;background:#fff;border:1px solid #c4c4c4;border-top:none"></div>
<div class="t " style="left:213.06px;top:173.00px;font-size:11.5px;line-height:14px;letter-spacing:-0.102px;color:#000;">Drucken...</div>
<div class="a" style="left:344px;top:173.5px;width:18px;height:12px;background:#f0f0f0"></div>
<div class="t " style="left:345.60px;top:174.00px;font-size:11px;line-height:13px;letter-spacing:0.686px;color:#404040;">F9</div>
<div class="a" style="left:206px;top:201px;width:164px;height:21px;background:#c0c0c0"></div>
<div class="t " style="left:213.50px;top:205.00px;font-size:12px;line-height:14px;letter-spacing:0.049px;font-weight:bold;color:#404040;-webkit-text-stroke:0.3px #404040;">Filter</div>
<svg class="a" style="left:353px;top:209px;" width="8" height="6" viewBox="0 0 8 6"><path d="M0.900 4.400L3.600 1.200L6.300 4.400Z" fill="#404040"/></svg>
<div class="a" style="left:206px;top:222px;width:164px;height:51px;background:#fff;border:1px solid #c4c4c4;border-top:none"></div>
<div class="t " style="left:213.41px;top:229.00px;font-size:11.5px;line-height:14px;letter-spacing:-0.423px;color:#000;">Unternehmensbereich</div>
<div class="a" style="left:214px;top:245px;width:146px;height:20px;background:#fff;border:1px solid #a0a0a0;border-right-color:#e3e3e3;border-bottom-color:#e3e3e3;box-shadow:inset 1px 1px 0 #696969"></div>
<div class="t " style="left:218.13px;top:249.00px;font-size:11.5px;line-height:14px;letter-spacing:-0.104px;color:#000;">&lt;Kein&gt;</div>
<div class="a" style="left:343px;top:247px;width:17px;height:17px;background:#f0f0f0;border:1px solid #696969;border-left-color:#fff;border-top-color:#fff;box-shadow:inset -1px -1px 0 #a0a0a0"></div>
<svg class="a" style="left:347.3px;top:253px;" width="9" height="6" viewBox="0 0 9 6"><path d="M0.600 0.800H8L4.300 5Z" fill="#000"/></svg>
<div class="a" style="left:206px;top:281px;width:164px;height:21px;background:#c0c0c0"></div>
<div class="t " style="left:213.95px;top:285.00px;font-size:12px;line-height:14px;letter-spacing:-0.390px;font-weight:bold;color:#404040;-webkit-text-stroke:0.3px #404040;">Suchen</div>
<svg class="a" style="left:353px;top:289px;" width="8" height="6" viewBox="0 0 8 6"><path d="M0.900 4.400L3.600 1.200L6.300 4.400Z" fill="#404040"/></svg>
<div class="a" style="left:206px;top:302px;width:164px;height:35px;background:#fff;border:1px solid #c4c4c4;border-top:none"></div>
<div class="a" style="left:214px;top:309px;width:70px;height:20px;background:#fff;border:1px solid #000"></div>
<div class="a" style="left:206px;top:689px;width:164px;height:21px;background:#c0c0c0"></div>
<div class="t " style="left:213.95px;top:693.00px;font-size:12px;line-height:14px;letter-spacing:-0.219px;font-weight:bold;color:#404040;-webkit-text-stroke:0.3px #404040;">Siehe auch</div>
<svg class="a" style="left:353px;top:697px;" width="8" height="6" viewBox="0 0 8 6"><path d="M0.900 4.400L3.600 1.200L6.300 4.400Z" fill="#404040"/></svg>
<div class="a" style="left:206px;top:710px;width:164px;height:27px;background:#fff;border:1px solid #c4c4c4;border-top:none"></div>
<div class="t " style="left:213.40px;top:717.00px;font-size:11.5px;line-height:14px;letter-spacing:-0.300px;color:#000;transform:scale(0.9635,1);transform-origin:0 11px;">Sets</div>
<svg class="a" style="left:285px;top:308px" width="80" height="22" viewBox="285 308 80 22"><defs><linearGradient id="bg" x1="0" y1="0" x2="0" y2="1"><stop offset="0" stop-color="#eeeeee"/><stop offset="1" stop-color="#cecece"/></linearGradient></defs><rect x="286.5" y="309.500" width="23" height="19" fill="url(#bg)" stroke="#b9b9b9"/><rect x="287.5" y="310.500" width="21" height="17" fill="none" stroke="#ebebeb"/><rect x="312.5" y="309.500" width="23" height="19" fill="url(#bg)" stroke="#b9b9b9"/><rect x="313.5" y="310.500" width="21" height="17" fill="none" stroke="#ebebeb"/><rect x="338.5" y="309.500" width="23" height="19" fill="url(#bg)" stroke="#b9b9b9"/><rect x="339.5" y="310.500" width="21" height="17" fill="none" stroke="#ebebeb"/><g shape-rendering="crispEdges"><rect x="290" y="312" width="11" height="1" fill="#000"/><rect x="291" y="313" width="1" height="1" fill="#000"/><rect x="292" y="313" width="1" height="1" fill="#00a8a8"/><rect x="293" y="313" width="5" height="1" fill="#fff"/><rect x="298" y="313" width="1" height="1" fill="#00a8a8"/><rect x="299" y="313" width="1" height="1" fill="#000"/><rect x="292" y="314" width="1" height="1" fill="#000"/><rect x="293" y="314" width="1" height="1" fill="#00a8a8"/><rect x="294" y="314" width="3" height="1" fill="#fff"/><rect x="297" y="314" width="1" height="1" fill="#00a8a8"/><rect x="298" y="314" width="1" height="1" fill="#000"/><rect x="293" y="315" width="1" height="1" fill="#000"/><rect x="294" y="315" width="1" height="1" fill="#00a8a8"/><rect x="295" y="315" width="1" height="1" fill="#fff"/><rect x="296" y="315" width="1" height="1" fill="#00a8a8"/><rect x="297" y="315" width="1" height="1" fill="#000"/><rect x="294" y="316" width="1" height="1" fill="#000"/><rect x="295" y="316" width="1" height="1" fill="#00a8a8"/><rect x="296" y="316" width="1" height="1" fill="#000"/><rect x="294" y="317" width="1" height="1" fill="#000"/><rect x="295" y="317" width="1" height="1" fill="#00a8a8"/><rect x="296" y="317" width="1" height="1" fill="#000"/><rect x="294" y="318" width="1" height="1" fill="#000"/><rect x="295" y="318" width="1" height="1" fill="#00a8a8"/><rect x="296" y="318" width="1" height="1" fill="#000"/><rect x="294" y="319" width="3" height="1" fill="#000"/><rect x="303" y="315" width="2" height="1" fill="#ffff00"/><rect x="305" y="315" width="1" height="1" fill="#000"/><rect x="302" y="316" width="2" height="1" fill="#ffff00"/><rect x="304" y="316" width="2" height="1" fill="#000"/><rect x="301" y="317" width="2" height="1" fill="#ffff00"/><rect x="303" y="317" width="2" height="1" fill="#000"/><rect x="300" y="318" width="2" height="1" fill="#ffff00"/><rect x="302" y="318" width="2" height="1" fill="#000"/><rect x="299" y="319" width="6" height="1" fill="#ffff00"/><rect x="305" y="319" width="1" height="1" fill="#000"/><rect x="298" y="320" width="3" height="1" fill="#000"/><rect x="301" y="320" width="3" height="1" fill="#ffff00"/><rect x="304" y="320" width="2" height="1" fill="#000"/><rect x="301" y="321" width="2" height="1" fill="#ffff00"/><rect x="303" y="321" width="2" height="1" fill="#000"/><rect x="300" y="322" width="2" height="1" fill="#ffff00"/><rect x="302" y="322" width="2" height="1" fill="#000"/><rect x="299" y="323" width="2" height="1" fill="#ffff00"/><rect x="301" y="323" width="2" height="1" fill="#000"/><rect x="298" y="324" width="2" height="1" fill="#ffff00"/><rect x="300" y="324" width="2" height="1" fill="#000"/><rect x="298" y="325" width="1" height="1" fill="#ffff00"/><rect x="299" y="325" width="2" height="1" fill="#000"/><rect x="298" y="326" width="2" height="1" fill="#000"/><rect x="316" y="312" width="11" height="1" fill="#000"/><rect x="317" y="313" width="1" height="1" fill="#000"/><rect x="318" y="313" width="1" height="1" fill="#00a8a8"/><rect x="319" y="313" width="5" height="1" fill="#fff"/><rect x="324" y="313" width="1" height="1" fill="#00a8a8"/><rect x="325" y="313" width="1" height="1" fill="#000"/><rect x="318" y="314" width="1" height="1" fill="#000"/><rect x="319" y="314" width="1" height="1" fill="#00a8a8"/><rect x="320" y="314" width="3" height="1" fill="#fff"/><rect x="323" y="314" width="1" height="1" fill="#00a8a8"/><rect x="324" y="314" width="1" height="1" fill="#000"/><rect x="319" y="315" width="1" height="1" fill="#000"/><rect x="320" y="315" width="1" height="1" fill="#00a8a8"/><rect x="321" y="315" width="1" height="1" fill="#fff"/><rect x="322" y="315" width="1" height="1" fill="#00a8a8"/><rect x="323" y="315" width="1" height="1" fill="#000"/><rect x="320" y="316" width="1" height="1" fill="#000"/><rect x="321" y="316" width="1" height="1" fill="#00a8a8"/><rect x="322" y="316" width="1" height="1" fill="#000"/><rect x="320" y="317" width="1" height="1" fill="#000"/><rect x="321" y="317" width="1" height="1" fill="#00a8a8"/><rect x="322" y="317" width="1" height="1" fill="#000"/><rect x="320" y="318" width="1" height="1" fill="#000"/><rect x="321" y="318" width="1" height="1" fill="#00a8a8"/><rect x="322" y="318" width="1" height="1" fill="#000"/><rect x="320" y="319" width="3" height="1" fill="#000"/><rect x="322" y="316" width="9" height="1" fill="#0000ff"/><rect x="322" y="317" width="9" height="1" fill="#0000ff"/><rect x="322" y="318" width="1" height="1" fill="#000"/><rect x="323" y="318" width="7" height="1" fill="#fff"/><rect x="330" y="318" width="1" height="1" fill="#000"/><rect x="322" y="319" width="1" height="1" fill="#000"/><rect x="323" y="319" width="1" height="1" fill="#fff"/><rect x="324" y="319" width="5" height="1" fill="#000"/><rect x="329" y="319" width="1" height="1" fill="#fff"/><rect x="330" y="319" width="1" height="1" fill="#000"/><rect x="322" y="320" width="1" height="1" fill="#000"/><rect x="323" y="320" width="7" height="1" fill="#fff"/><rect x="330" y="320" width="1" height="1" fill="#000"/><rect x="322" y="321" width="1" height="1" fill="#000"/><rect x="323" y="321" width="1" height="1" fill="#fff"/><rect x="324" y="321" width="3" height="1" fill="#000"/><rect x="327" y="321" width="3" height="1" fill="#fff"/><rect x="330" y="321" width="1" height="1" fill="#000"/><rect x="322" y="322" width="1" height="1" fill="#000"/><rect x="323" y="322" width="7" height="1" fill="#fff"/><rect x="330" y="322" width="1" height="1" fill="#000"/><rect x="322" y="323" width="1" height="1" fill="#000"/><rect x="323" y="323" width="1" height="1" fill="#fff"/><rect x="324" y="323" width="5" height="1" fill="#000"/><rect x="329" y="323" width="1" height="1" fill="#fff"/><rect x="330" y="323" width="1" height="1" fill="#000"/><rect x="322" y="324" width="1" height="1" fill="#000"/><rect x="323" y="324" width="7" height="1" fill="#fff"/><rect x="330" y="324" width="1" height="1" fill="#000"/><rect x="322" y="325" width="9" height="1" fill="#000"/><rect x="342" y="312" width="11" height="1" fill="#000"/><rect x="343" y="313" width="1" height="1" fill="#000"/><rect x="344" y="313" width="1" height="1" fill="#00a8a8"/><rect x="345" y="313" width="5" height="1" fill="#fff"/><rect x="350" y="313" width="1" height="1" fill="#00a8a8"/><rect x="351" y="313" width="1" height="1" fill="#000"/><rect x="344" y="314" width="1" height="1" fill="#000"/><rect x="345" y="314" width="1" height="1" fill="#00a8a8"/><rect x="346" y="314" width="3" height="1" fill="#fff"/><rect x="349" y="314" width="1" height="1" fill="#00a8a8"/><rect x="350" y="314" width="1" height="1" fill="#000"/><rect x="345" y="315" width="1" height="1" fill="#000"/><rect x="346" y="315" width="1" height="1" fill="#00a8a8"/><rect x="347" y="315" width="1" height="1" fill="#fff"/><rect x="348" y="315" width="1" height="1" fill="#00a8a8"/><rect x="349" y="315" width="1" height="1" fill="#000"/><rect x="346" y="316" width="1" height="1" fill="#000"/><rect x="347" y="316" width="1" height="1" fill="#00a8a8"/><rect x="348" y="316" width="1" height="1" fill="#000"/><rect x="346" y="317" width="1" height="1" fill="#000"/><rect x="347" y="317" width="1" height="1" fill="#00a8a8"/><rect x="348" y="317" width="1" height="1" fill="#000"/><rect x="346" y="318" width="1" height="1" fill="#000"/><rect x="347" y="318" width="1" height="1" fill="#00a8a8"/><rect x="348" y="318" width="1" height="1" fill="#000"/><rect x="346" y="319" width="3" height="1" fill="#000"/></g><path d="M347.500 315.500L357.300 324.300M356.500 314.300L348.300 324.300" stroke="#8b0000" stroke-width="2.100"/></svg>
<div class="a" style="left:378px;top:137px;width:900px;height:590px;background:#fff"></div>
<div class="a" style="left:378px;top:137px;width:17px;height:17px;background:#f0f0f0"></div>
<div class="a" style="left:395px;top:137px;width:112px;height:17px;background:#b5d94c"></div>
<div class="a" style="left:508px;top:137px;width:528px;height:17px;background:#f0f0f0"></div>
<div class="t " style="left:414.02px;top:138.00px;font-size:13.33px;line-height:16px;letter-spacing:-0.030px;font-weight:bold;color:#000;transform:scale(1.0000,1.04);transform-origin:0 12px;">Setnummer</div>
<div class="t " style="left:623.51px;top:138.00px;font-size:13.33px;line-height:16px;letter-spacing:0.034px;font-weight:bold;color:#000;transform:scale(1.0000,1.04);transform-origin:0 12px;">Kurztext</div>
<div class="t " style="left:801.90px;top:138.00px;font-size:13.33px;line-height:16px;letter-spacing:-0.050px;font-weight:bold;color:#000;transform:scale(1.0000,1.04);transform-origin:0 12px;">Jahr</div>
<div class="t " style="left:864.10px;top:138.00px;font-size:13.33px;line-height:16px;letter-spacing:-0.264px;font-weight:bold;color:#8b0000;transform:scale(1.0000,1.04);transform-origin:0 12px;">Umsatz</div>
<div class="t " style="left:945.81px;top:138.00px;font-size:13.33px;line-height:16px;letter-spacing:-0.117px;font-weight:bold;color:#8b0000;transform:scale(1.0000,1.04);transform-origin:0 12px;">Bruttonutzen</div>
<div class="a" style="left:378px;top:154px;width:17px;height:573px;background:#f0f0f0"></div>
<svg class="a" style="left:377px;top:137px" width="661" height="590" viewBox="377 137 661 590" shape-rendering="crispEdges"><path d="M378 154.5H395" stroke="#000"/><path d="M395 154.5H1037" stroke="#808080"/><path d="M378 172.5H395" stroke="#000"/><path d="M395 172.5H1037" stroke="#808080"/><path d="M378 190.5H395" stroke="#000"/><path d="M395 190.5H1037" stroke="#808080"/><path d="M378 208.5H395" stroke="#000"/><path d="M395 208.5H1037" stroke="#808080"/><path d="M378 226.5H395" stroke="#000"/><path d="M395 226.5H1037" stroke="#808080"/><path d="M378 244.5H395" stroke="#000"/><path d="M395 244.5H1037" stroke="#808080"/><path d="M378 262.5H395" stroke="#000"/><path d="M395 262.5H1037" stroke="#808080"/><path d="M378 280.5H395" stroke="#000"/><path d="M395 280.5H1037" stroke="#808080"/><path d="M378 298.5H395" stroke="#000"/><path d="M395 298.5H1037" stroke="#808080"/><path d="M378 316.5H395" stroke="#000"/><path d="M395 316.5H1037" stroke="#808080"/><path d="M378 334.5H395" stroke="#000"/><path d="M395 334.5H1037" stroke="#808080"/><path d="M378 352.5H395" stroke="#000"/><path d="M395 352.5H1037" stroke="#808080"/><path d="M378 370.5H395" stroke="#000"/><path d="M395 370.5H1037" stroke="#808080"/><path d="M378 388.5H395" stroke="#000"/><path d="M395 388.5H1037" stroke="#808080"/><path d="M378 406.5H395" stroke="#000"/><path d="M395 406.5H1037" stroke="#808080"/><path d="M378 424.5H395" stroke="#000"/><path d="M395 424.5H1037" stroke="#808080"/><path d="M378 442.5H395" stroke="#000"/><path d="M395 442.5H1037" stroke="#808080"/><path d="M378 460.5H395" stroke="#000"/><path d="M395 460.5H1037" stroke="#808080"/><path d="M378 478.5H395" stroke="#000"/><path d="M395 478.5H1037" stroke="#808080"/><path d="M378 496.5H395" stroke="#000"/><path d="M395 496.5H1037" stroke="#808080"/><path d="M378 514.5H395" stroke="#000"/><path d="M395 514.5H1037" stroke="#808080"/><path d="M378 532.5H395" stroke="#000"/><path d="M395 532.5H1037" stroke="#808080"/><path d="M378 550.5H395" stroke="#000"/><path d="M395 550.5H1037" stroke="#808080"/><path d="M378 568.5H395" stroke="#000"/><path d="M395 568.5H1037" stroke="#808080"/><path d="M378 586.5H395" stroke="#000"/><path d="M395 586.5H1037" stroke="#808080"/><path d="M378 604.5H395" stroke="#000"/><path d="M395 604.5H1037" stroke="#808080"/><path d="M378 622.5H395" stroke="#000"/><path d="M395 622.5H1037" stroke="#808080"/><path d="M378 640.5H395" stroke="#000"/><path d="M395 640.5H1037" stroke="#808080"/><path d="M378 658.5H395" stroke="#000"/><path d="M395 658.5H1037" stroke="#808080"/><path d="M378 676.5H395" stroke="#000"/><path d="M395 676.5H1037" stroke="#808080"/><path d="M378 694.5H395" stroke="#000"/><path d="M395 694.5H1037" stroke="#808080"/><path d="M378 712.5H395" stroke="#000"/><path d="M395 712.5H1037" stroke="#808080"/><path d="M394.500 137V727" stroke="#000"/><path d="M507.5 137V727" stroke="#808080"/><path d="M795.5 137V727" stroke="#808080"/><path d="M838.5 137V727" stroke="#808080"/><path d="M937.5 137V727" stroke="#808080"/><path d="M1036.5 137V727" stroke="#808080"/><path d="M377.500 137V727" stroke="#aca899"/></svg>
<div class="a" style="left:397px;top:155px;width:50px;height:16px;background:#0078d7"></div>
<div class="a" style="left:447px;top:155px;width:1px;height:16px;background:#e8853c"></div>
<div class="t " style="left:397.15px;top:156.00px;font-size:13.33px;line-height:16px;letter-spacing:-0.300px;word-spacing:0.800px;color:#fff;transform:scale(0.9688,1.05);transform-origin:0 12px;">e-an 033</div>
<div class="t " style="left:510.22px;top:156.00px;font-size:13.33px;line-height:16px;letter-spacing:-0.293px;word-spacing:0.800px;color:#000;transform:scale(1.0000,1.05);transform-origin:0 12px;">Antennensteckdose Gedu 2411</div>
<div class="t " style="left:801.63px;top:156.00px;font-size:13.33px;line-height:16px;letter-spacing:-0.383px;color:#000;transform:scale(1.0000,1.05);transform-origin:0 12px;">2019</div>
<div class="t " style="left:884.27px;top:156.00px;font-size:13.33px;line-height:16px;letter-spacing:-0.380px;word-spacing:0.500px;color:#000;transform:scale(1.0000,1.05);transform-origin:0 12px;">129,12 €</div>
<div class="t " style="left:997.43px;top:156.00px;font-size:13.33px;line-height:16px;letter-spacing:-0.380px;word-spacing:0.500px;color:#000;transform:scale(1.0000,1.05);transform-origin:0 12px;">9,60 €</div>
<div class="t " style="left:397.13px;top:174.00px;font-size:13.33px;line-height:16px;letter-spacing:-0.435px;word-spacing:0.800px;color:#000;transform:scale(1.0000,1.05);transform-origin:0 12px;">e-ka 005</div>
<div class="t " style="left:509.16px;top:174.00px;font-size:13.33px;line-height:16px;letter-spacing:-0.241px;word-spacing:0.800px;color:#000;transform:scale(1.0000,1.05);transform-origin:0 12px;">NYM 5 x 1,5 Leerrohr/Kabelkanal</div>
<div class="t " style="left:801.63px;top:174.00px;font-size:13.33px;line-height:16px;letter-spacing:-0.383px;color:#000;transform:scale(1.0000,1.05);transform-origin:0 12px;">2019</div>
<div class="t " style="left:884.27px;top:174.00px;font-size:13.33px;line-height:16px;letter-spacing:-0.380px;word-spacing:0.500px;color:#000;transform:scale(1.0000,1.05);transform-origin:0 12px;">232,70 €</div>
<div class="t " style="left:990.40px;top:174.00px;font-size:13.33px;line-height:16px;letter-spacing:-0.380px;word-spacing:0.500px;color:#000;transform:scale(1.0000,1.05);transform-origin:0 12px;">16,90 €</div>
<div class="t " style="left:397.13px;top:192.00px;font-size:13.33px;line-height:16px;letter-spacing:-0.420px;word-spacing:0.800px;color:#000;transform:scale(1.0000,1.05);transform-origin:0 12px;">e-st 001</div>
<div class="t " style="left:510.22px;top:192.00px;font-size:13.33px;line-height:16px;letter-spacing:-0.025px;word-spacing:-0.867px;color:#000;transform:scale(1.0000,1.05);transform-origin:0 12px;">Aus/Wechselschalter u. P. Standard</div>
<div class="t " style="left:801.63px;top:192.00px;font-size:13.33px;line-height:16px;letter-spacing:-0.383px;color:#000;transform:scale(1.0000,1.05);transform-origin:0 12px;">2019</div>
<div class="t " style="left:891.30px;top:192.00px;font-size:13.33px;line-height:16px;letter-spacing:-0.380px;word-spacing:0.500px;color:#000;transform:scale(1.0000,1.05);transform-origin:0 12px;">17,94 €</div>
<div class="t " style="left:997.43px;top:192.00px;font-size:13.33px;line-height:16px;letter-spacing:-0.380px;word-spacing:0.500px;color:#000;transform:scale(1.0000,1.05);transform-origin:0 12px;">1,32 €</div>
<div class="t " style="left:397.16px;top:210.00px;font-size:13.33px;line-height:16px;letter-spacing:-0.300px;word-spacing:0.800px;color:#000;transform:scale(0.9597,1.05);transform-origin:0 12px;">e-st 011</div>
<div class="t " style="left:509.64px;top:210.00px;font-size:13.33px;line-height:16px;letter-spacing:-0.196px;word-spacing:0.800px;color:#000;transform:scale(1.0000,1.05);transform-origin:0 12px;">Schalterabdeckung Standard</div>
<div class="t " style="left:801.63px;top:210.00px;font-size:13.33px;line-height:16px;letter-spacing:-0.383px;color:#000;transform:scale(1.0000,1.05);transform-origin:0 12px;">2019</div>
<div class="t " style="left:898.33px;top:210.00px;font-size:13.33px;line-height:16px;letter-spacing:-0.380px;word-spacing:0.500px;color:#000;transform:scale(1.0000,1.05);transform-origin:0 12px;">5,40 €</div>
<div class="t " style="left:997.43px;top:210.00px;font-size:13.33px;line-height:16px;letter-spacing:-0.380px;word-spacing:0.500px;color:#000;transform:scale(1.0000,1.05);transform-origin:0 12px;">0,42 €</div>
<div class="t " style="left:396.81px;top:228.00px;font-size:13.33px;line-height:16px;letter-spacing:-0.393px;word-spacing:0.800px;color:#000;transform:scale(1.0000,1.05);transform-origin:0 12px;">m-ab 002</div>
<div class="t " style="left:510.22px;top:228.00px;font-size:13.33px;line-height:16px;letter-spacing:-0.231px;word-spacing:0.800px;color:#000;transform:scale(1.0000,1.05);transform-origin:0 12px;">Abdecken Folie</div>
<div class="t " style="left:801.63px;top:228.00px;font-size:13.33px;line-height:16px;letter-spacing:-0.383px;color:#000;transform:scale(1.0000,1.05);transform-origin:0 12px;">2019</div>
<div class="t " style="left:884.27px;top:228.00px;font-size:13.33px;line-height:16px;letter-spacing:-0.380px;word-spacing:0.500px;color:#000;transform:scale(1.0000,1.05);transform-origin:0 12px;">127,60 €</div>
<div class="t " style="left:997.43px;top:228.00px;font-size:13.33px;line-height:16px;letter-spacing:-0.380px;word-spacing:0.500px;color:#000;transform:scale(1.0000,1.05);transform-origin:0 12px;">9,86 €</div>
<div class="t " style="left:396.81px;top:246.00px;font-size:13.33px;line-height:16px;letter-spacing:-0.431px;word-spacing:0.800px;color:#000;transform:scale(1.0000,1.05);transform-origin:0 12px;">m-pi 021</div>
<div class="t " style="left:509.16px;top:246.00px;font-size:13.33px;line-height:16px;letter-spacing:-0.233px;word-spacing:0.800px;color:#000;transform:scale(1.0000,1.05);transform-origin:0 12px;">Latexfarbe scheuerbeständig 1 x</div>
<div class="t " style="left:801.63px;top:246.00px;font-size:13.33px;line-height:16px;letter-spacing:-0.383px;color:#000;transform:scale(1.0000,1.05);transform-origin:0 12px;">2019</div>
<div class="t " style="left:884.27px;top:246.00px;font-size:13.33px;line-height:16px;letter-spacing:-0.380px;word-spacing:0.500px;color:#000;transform:scale(1.0000,1.05);transform-origin:0 12px;">402,50 €</div>
<div class="t " style="left:990.40px;top:246.00px;font-size:13.33px;line-height:16px;letter-spacing:-0.380px;word-spacing:0.500px;color:#000;transform:scale(1.0000,1.05);transform-origin:0 12px;">30,00 €</div>
<div class="t " style="left:396.86px;top:264.00px;font-size:13.33px;line-height:16px;letter-spacing:-0.300px;word-spacing:0.800px;color:#000;transform:scale(0.9534,1.05);transform-origin:0 12px;">m-pvi 001</div>
<div class="t " style="left:509.64px;top:264.00px;font-size:13.33px;line-height:16px;letter-spacing:-0.295px;word-spacing:0.800px;color:#000;transform:scale(1.0000,1.05);transform-origin:0 12px;">Staub entfernen</div>
<div class="t " style="left:801.63px;top:264.00px;font-size:13.33px;line-height:16px;letter-spacing:-0.383px;color:#000;transform:scale(1.0000,1.05);transform-origin:0 12px;">2019</div>
<div class="t " style="left:884.27px;top:264.00px;font-size:13.33px;line-height:16px;letter-spacing:-0.380px;word-spacing:0.500px;color:#000;transform:scale(1.0000,1.05);transform-origin:0 12px;">182,50 €</div>
<div class="t " style="left:990.40px;top:264.00px;font-size:13.33px;line-height:16px;letter-spacing:-0.380px;word-spacing:0.500px;color:#000;transform:scale(1.0000,1.05);transform-origin:0 12px;">12,50 €</div>
<div class="t " style="left:396.86px;top:282.00px;font-size:13.33px;line-height:16px;letter-spacing:-0.300px;word-spacing:0.800px;color:#000;transform:scale(0.9534,1.05);transform-origin:0 12px;">m-pvi 051</div>
<div class="t " style="left:509.16px;top:282.00px;font-size:13.33px;line-height:16px;letter-spacing:-0.088px;word-spacing:0.800px;color:#000;transform:scale(1.0000,1.05);transform-origin:0 12px;">Putzschäden, klein, beispachteln</div>
<div class="t " style="left:801.63px;top:282.00px;font-size:13.33px;line-height:16px;letter-spacing:-0.383px;color:#000;transform:scale(1.0000,1.05);transform-origin:0 12px;">2019</div>
<div class="t " style="left:891.30px;top:282.00px;font-size:13.33px;line-height:16px;letter-spacing:-0.380px;word-spacing:0.500px;color:#000;transform:scale(1.0000,1.05);transform-origin:0 12px;">91,25 €</div>
<div class="t " style="left:997.43px;top:282.00px;font-size:13.33px;line-height:16px;letter-spacing:-0.380px;word-spacing:0.500px;color:#000;transform:scale(1.0000,1.05);transform-origin:0 12px;">6,25 €</div>
<div class="t " style="left:396.84px;top:300.00px;font-size:13.33px;line-height:16px;letter-spacing:-0.300px;word-spacing:0.800px;color:#000;transform:scale(0.9673,1.05);transform-origin:0 12px;">m-pvi 100</div>
<div class="t " style="left:509.16px;top:300.00px;font-size:13.33px;line-height:16px;letter-spacing:-0.332px;word-spacing:0.800px;color:#000;transform:scale(1.0000,1.05);transform-origin:0 12px;">Leimfarbe entfernen</div>
<div class="t " style="left:801.63px;top:300.00px;font-size:13.33px;line-height:16px;letter-spacing:-0.383px;color:#000;transform:scale(1.0000,1.05);transform-origin:0 12px;">2019</div>
<div class="t " style="left:884.27px;top:300.00px;font-size:13.33px;line-height:16px;letter-spacing:-0.380px;word-spacing:0.500px;color:#000;transform:scale(1.0000,1.05);transform-origin:0 12px;">741,25 €</div>
<div class="t " style="left:990.40px;top:300.00px;font-size:13.33px;line-height:16px;letter-spacing:-0.380px;word-spacing:0.500px;color:#000;transform:scale(1.0000,1.05);transform-origin:0 12px;">55,00 €</div>
<div class="t " style="left:397.09px;top:318.00px;font-size:13.33px;line-height:16px;letter-spacing:-0.286px;word-spacing:0.800px;color:#000;transform:scale(1.0000,1.05);transform-origin:0 12px;">Set-0003</div>
<div class="t " style="left:509.16px;top:318.00px;font-size:13.33px;line-height:16px;letter-spacing:-0.274px;word-spacing:0.800px;color:#000;transform:scale(1.0000,1.05);transform-origin:0 12px;">Randsteine setzen und Verbundpflaster</div>
<div class="t " style="left:801.63px;top:318.00px;font-size:13.33px;line-height:16px;letter-spacing:-0.383px;color:#000;transform:scale(1.0000,1.05);transform-origin:0 12px;">2019</div>
<div class="t " style="left:884.27px;top:318.00px;font-size:13.33px;line-height:16px;letter-spacing:-0.380px;word-spacing:0.500px;color:#000;transform:scale(1.0000,1.05);transform-origin:0 12px;">757,80 €</div>
<div class="t " style="left:990.40px;top:318.00px;font-size:13.33px;line-height:16px;letter-spacing:-0.380px;word-spacing:0.500px;color:#000;transform:scale(1.0000,1.05);transform-origin:0 12px;">56,25 €</div>
<div class="t " style="left:397.09px;top:336.00px;font-size:13.33px;line-height:16px;letter-spacing:-0.281px;word-spacing:0.800px;color:#000;transform:scale(1.0000,1.05);transform-origin:0 12px;">Set-004</div>
<div class="t " style="left:510.22px;top:336.00px;font-size:13.33px;line-height:16px;letter-spacing:-0.125px;word-spacing:0.800px;color:#000;transform:scale(1.0000,1.05);transform-origin:0 12px;">Ausschachtarbeiten</div>
<div class="t " style="left:801.63px;top:336.00px;font-size:13.33px;line-height:16px;letter-spacing:-0.383px;color:#000;transform:scale(1.0000,1.05);transform-origin:0 12px;">2019</div>
<div class="t " style="left:891.30px;top:336.00px;font-size:13.33px;line-height:16px;letter-spacing:-0.380px;word-spacing:0.500px;color:#000;transform:scale(1.0000,1.05);transform-origin:0 12px;">31,12 €</div>
<div class="t " style="left:997.43px;top:336.00px;font-size:13.33px;line-height:16px;letter-spacing:-0.380px;word-spacing:0.500px;color:#000;transform:scale(1.0000,1.05);transform-origin:0 12px;">2,24 €</div>
<div class="t " style="left:397.09px;top:354.00px;font-size:13.33px;line-height:16px;letter-spacing:-0.303px;word-spacing:0.800px;color:#000;transform:scale(1.0000,1.05);transform-origin:0 12px;">Set-005</div>
<div class="t " style="left:510.22px;top:354.00px;font-size:13.33px;line-height:16px;letter-spacing:-0.279px;word-spacing:0.800px;color:#000;transform:scale(1.0000,1.05);transform-origin:0 12px;">Abflussrinne in Mörtelbett verlegen</div>
<div class="t " style="left:801.63px;top:354.00px;font-size:13.33px;line-height:16px;letter-spacing:-0.383px;color:#000;transform:scale(1.0000,1.05);transform-origin:0 12px;">2019</div>
<div class="t " style="left:891.30px;top:354.00px;font-size:13.33px;line-height:16px;letter-spacing:-0.380px;word-spacing:0.500px;color:#000;transform:scale(1.0000,1.05);transform-origin:0 12px;">93,33 €</div>
<div class="t " style="left:997.43px;top:354.00px;font-size:13.33px;line-height:16px;letter-spacing:-0.380px;word-spacing:0.500px;color:#000;transform:scale(1.0000,1.05);transform-origin:0 12px;">6,88 €</div>
<svg class="a" style="left:383px;top:158px;" width="8" height="12" viewBox="0 0 8 12"><path d="M0.500 0.500V11L7 5.750Z" fill="#000"/></svg>
<div class="a" style="left:378px;top:726px;width:901px;height:19px;background:#f0f0f0;border-top:1px solid #7a7a7a;border-bottom:1px solid #7a7a7a"></div>
<div class="a" style="left:378px;top:727px;width:18px;height:17px;background:#f0f0f0;border:1px solid #808080;border-left-color:#fff;border-top-color:#fff;"></div>
<div class="a" style="left:397px;top:727px;width:18px;height:17px;background:#f0f0f0;border:1px solid #808080;border-left-color:#fff;border-top-color:#fff;"></div>
<div class="a" style="left:1242px;top:727px;width:18px;height:17px;background:#f0f0f0;border:1px solid #808080;border-left-color:#fff;border-top-color:#fff;"></div>
<div class="a" style="left:1261px;top:727px;width:18px;height:17px;background:#f0f0f0;border:1px solid #808080;border-left-color:#fff;border-top-color:#fff;"></div>
<svg class="a" style="left:380px;top:728px;" width="14" height="15" viewBox="0 0 14 15"><path d="M3.100 2V13H5V2Z" fill="#000"/><path d="M12.300 2V13L5.500 7.500Z" fill="#000"/></svg>
<svg class="a" style="left:399px;top:728px;" width="14" height="15" viewBox="0 0 14 15"><path d="M10.800 2V13L3.800 7.500Z" fill="#000"/></svg>
<svg class="a" style="left:1244px;top:728px;" width="14" height="15" viewBox="0 0 14 15"><path d="M4 2V13L10.300 7.500Z" fill="#000"/></svg>
<svg class="a" style="left:1263px;top:728px;" width="14" height="15" viewBox="0 0 14 15"><path d="M10 2V13H12V2Z" fill="#000"/><path d="M2.900 2V13L9.300 7.500Z" fill="#000"/></svg>
<div class="t " style="left:419.80px;top:729.00px;font-size:11.5px;line-height:14px;letter-spacing:-0.300px;color:#000;transform:scale(0.8579,1);transform-origin:0 11px;">SQL</div>
<div class="t " style="left:442.02px;top:729.00px;font-size:11.5px;line-height:14px;letter-spacing:-0.300px;color:#000;transform:scale(0.9019,1);transform-origin:0 11px;">TOP</div>
<div class="t " style="left:465.68px;top:729.00px;font-size:11.5px;line-height:14px;letter-spacing:-0.300px;color:#000;transform:scale(0.9333,1);transform-origin:0 11px;">1000</div>
<div class="t " style="left:491.36px;top:729.00px;font-size:11.5px;line-height:14px;letter-spacing:-0.212px;color:#000;">Datensatz 1 von</div>
<div class="t " style="left:575.52px;top:729.00px;font-size:11.5px;line-height:14px;letter-spacing:-0.300px;color:#000;transform:scale(0.8381,1);transform-origin:0 11px;">12</div>
<div class="t " style="left:589.02px;top:729.00px;font-size:11.5px;line-height:14px;letter-spacing:-0.418px;color:#000;">gelesenen</div>
<div class="a" style="left:1279px;top:137px;width:1px;height:608px;background:#a0a0a0"></div>
<div class="a" style="left:0px;top:751px;width:1280px;height:19px;background:#f0f0f0"></div>
<div class="a" style="left:0px;top:751px;width:887px;height:19px;border-left:1px solid #a0a0a0;border-top:1px solid #a0a0a0;border-right:1px solid #fff;"></div>
<div class="a" style="left:890px;top:751px;width:38px;height:19px;border-left:1px solid #a0a0a0;border-top:1px solid #a0a0a0;border-right:1px solid #fff;"></div>
<div class="a" style="left:931px;top:751px;width:38px;height:19px;border-left:1px solid #a0a0a0;border-top:1px solid #a0a0a0;border-right:1px solid #fff;"></div>
<div class="a" style="left:972px;top:751px;width:38px;height:19px;border-left:1px solid #a0a0a0;border-top:1px solid #a0a0a0;border-right:1px solid #fff;"></div>
<div class="a" style="left:1013px;top:751px;width:38px;height:19px;border-left:1px solid #a0a0a0;border-top:1px solid #a0a0a0;border-right:1px solid #fff;"></div>
<div class="a" style="left:1054px;top:751px;width:206px;height:19px;border-left:1px solid #a0a0a0;border-top:1px solid #a0a0a0;border-right:1px solid #fff;"></div>
<div class="t " style="left:1060.69px;top:754.00px;font-size:12px;line-height:14px;letter-spacing:0.151px;color:#000;">admin - Moser-Dokumentation.mdb</div>
</body></html>
